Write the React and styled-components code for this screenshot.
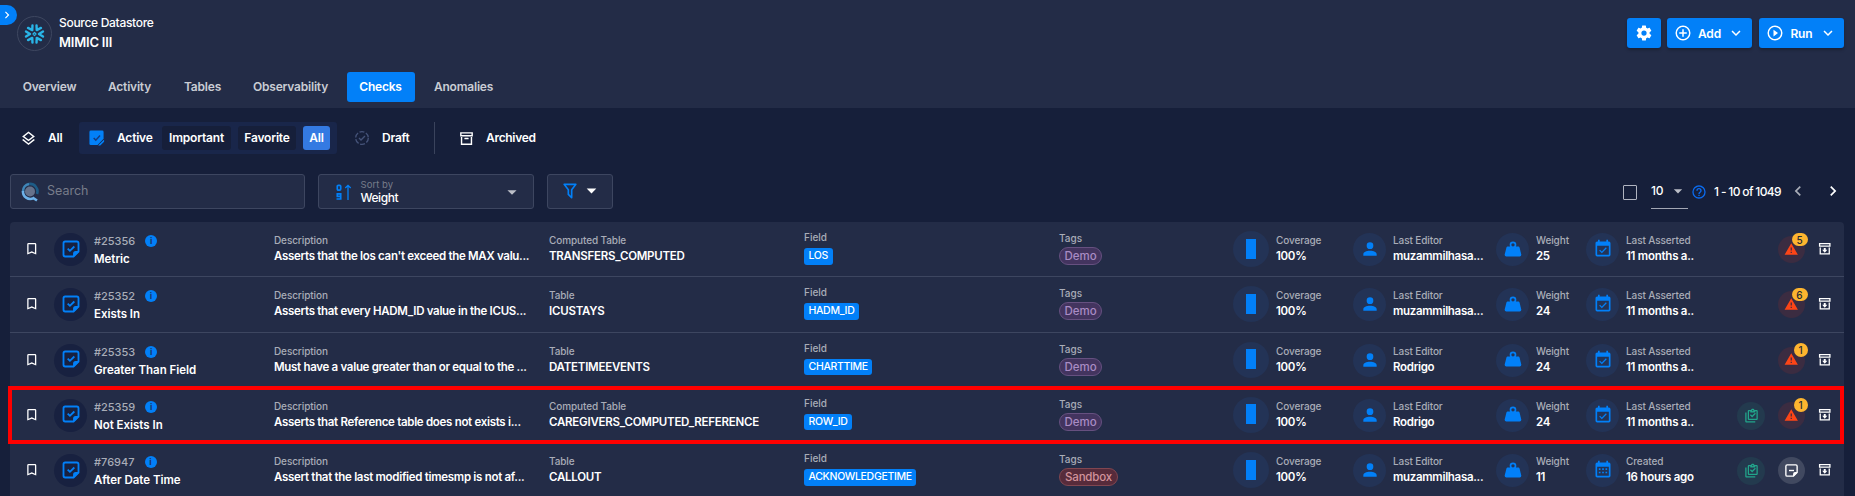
import React from "react";
import styled, { createGlobalStyle } from "styled-components";

const Global = createGlobalStyle`
  * { box-sizing: border-box; }
  body { margin: 0; background: #161f3a; color: #fff; font-family: Inter, "Liberation Sans", sans-serif; overflow: hidden; }
  svg { display: block; flex: none; }
`;

const paths = {
  right: "M8.59 16.58 13.17 12 8.59 7.41 10 6l6 6-6 6z",
  left: "M15.41 16.58 10.83 12l4.58-4.59L14 6l-6 6 6 6z",
  down: "M7.41 8.58 12 13.17l4.59-4.59L18 10l-6 6-6-6z",
  caret: "M7 10l5 5 5-5z",
  gear: "M12 15.5A3.5 3.5 0 0 1 8.5 12 3.5 3.5 0 0 1 12 8.5a3.5 3.5 0 0 1 3.5 3.5 3.5 3.5 0 0 1-3.5 3.5m7.43-2.53c.04-.32.07-.64.07-.97s-.03-.66-.07-1l2.11-1.63c.19-.15.24-.42.12-.64l-2-3.46c-.12-.22-.39-.31-.61-.22l-2.49 1c-.52-.39-1.06-.73-1.69-.98l-.37-2.65A.506.506 0 0 0 14 2h-4c-.25 0-.46.18-.5.42l-.37 2.65c-.63.25-1.17.59-1.69.98l-2.49-1c-.22-.09-.49 0-.61.22l-2 3.46c-.13.22-.07.49.12.64L4.57 11c-.04.34-.07.67-.07 1s.03.65.07.97l-2.11 1.66c-.19.15-.25.42-.12.64l2 3.46c.12.22.39.3.61.22l2.49-1.01c.52.4 1.06.74 1.69.99l.37 2.65c.04.24.25.42.5.42h4c.25 0 .46-.18.5-.42l.37-2.65c.63-.26 1.17-.59 1.69-.99l2.49 1.01c.22.08.49 0 .61-.22l2-3.46c.12-.22.07-.49-.12-.64z",
  plus: "M12 20c-4.41 0-8-3.59-8-8s3.59-8 8-8 8 3.59 8 8-3.59 8-8 8m0-18A10 10 0 0 0 2 12a10 10 0 0 0 10 10 10 10 0 0 0 10-10A10 10 0 0 0 12 2m1 5h-2v4H7v2h4v4h2v-4h4v-2h-4z",
  play: "M12 20c-4.41 0-8-3.59-8-8s3.59-8 8-8 8 3.59 8 8-3.59 8-8 8m0-18A10 10 0 0 0 2 12a10 10 0 0 0 10 10 10 10 0 0 0 10-10A10 10 0 0 0 12 2m-2 14.5 6-4.5-6-4.5z",
  layers: "M12 18.54l7.37-5.74L21 14.07l-9 7-9-7 1.62-1.26zM12 16l-9-7 9-7 9 7zm0-11.47L6.26 9 12 13.47 17.74 9z",
  archive: "M20 21H4V10h2v9h12v-9h2zM3 3h18v6H3zm6.5 8h5a.5.5 0 0 1 .5.5V13H9v-1.5a.5.5 0 0 1 .5-.5M5 5v2h14V5z",
  archiveDown: "M20 21H4V10h2v9h12v-9h2zM3 3h18v6H3zm2 2v2h14V5zm5.5 6v2.5H8L12 18l4-4.5h-2.5V11z",
  bookmark: "M17 18l-5-2.18L7 18V5h10m0-2H7a2 2 0 0 0-2 2v16l7-3 7 3V5a2 2 0 0 0-2-2z",
  funnel: "M15 19.88c.04.3-.06.62-.29.83a.996.996 0 0 1-1.41 0L9.29 16.7a.989.989 0 0 1-.29-.83v-5.12L4.21 4.62a1 1 0 0 1 .17-1.4c.19-.14.4-.22.62-.22h14c.22 0 .43.08.62.22a1 1 0 0 1 .17 1.4L15 10.75zM7.04 5 11 10.06v5.52l2 2v-7.53L16.96 5z",
  help: "M11 18h2v-2h-2zm1-16A10 10 0 0 0 2 12a10 10 0 0 0 10 10 10 10 0 0 0 10-10A10 10 0 0 0 12 2m0 18c-4.41 0-8-3.59-8-8s3.59-8 8-8 8 3.59 8 8-3.59 8-8 8m0-14a4 4 0 0 0-4 4h2a2 2 0 0 1 2-2 2 2 0 0 1 2 2c0 2-3 1.75-3 5h2c0-2.25 3-2.5 3-5a4 4 0 0 0-4-4z",
  person: "M12 4a4 4 0 0 1 4 4 4 4 0 0 1-4 4 4 4 0 0 1-4-4 4 4 0 0 1 4-4m0 10c4.42 0 8 1.79 8 4v2H4v-2c0-2.21 3.58-4 8-4z",
  weight: "M12 3a4 4 0 0 1 4 4c0 .73-.19 1.41-.54 2H18c.95 0 1.75.67 1.95 1.56C21.96 18.57 22 18.78 22 19a2 2 0 0 1-2 2H4a2 2 0 0 1-2-2c0-.22.04-.43 2.05-8.44C4.25 9.67 5.05 9 6 9h2.54A3.9 3.9 0 0 1 8 7a4 4 0 0 1 4-4m0 2a2 2 0 0 0-2 2 2 2 0 0 0 2 2 2 2 0 0 0 2-2 2 2 0 0 0-2-2z",
  calCheck: "M19 19H5V8h14m0-5h-1V1h-2v2H8V1H6v2H5c-1.11 0-2 .9-2 2v14a2 2 0 0 0 2 2h14a2 2 0 0 0 2-2V5a2 2 0 0 0-2-2m-2.47 8.06L15.47 10l-4.88 4.88-2.12-2.12-1.06 1.06L10.59 17z",
  calMonth: "M9 10v2H7v-2zm4 0v2h-2v-2zm4 0v2h-2v-2zm2-7a2 2 0 0 1 2 2v14a2 2 0 0 1-2 2H5c-1.11 0-2-.9-2-2V5a2 2 0 0 1 2-2h1V1h2v2h8V1h2v2zm0 16V8H5v11zM9 14v2H7v-2zm4 0v2h-2v-2zm4 0v2h-2v-2z",
  alert: "M13 14h-2V9h2m0 9h-2v-2h2M1 21h22L12 2z",
  clipboards: "M4 7v14h14v2H4c-1.1 0-2-.9-2-2V7zM20 3c1.1 0 2 .9 2 2v12c0 1.1-.9 2-2 2H8c-1.1 0-2-.9-2-2V5c0-1.1.9-2 2-2h3.18C11.6 1.84 12.7 1 14 1s2.4.84 2.82 2zm-6 0c-.55 0-1 .45-1 1s.45 1 1 1 1-.45 1-1-.45-1-1-1m-4 4V5H8v12h12V5h-2v2zm3 8-3.5-3.5 1.41-1.41L13 12.17l4.59-4.58L19 9z",
};

const Icon = ({ name, size = 18, color = "#fff" }) => (
  <svg width={size} height={size} viewBox="0 0 24 24" fill={color} fillRule="evenodd"><path d={paths[name]} /></svg>
);

const NoteCheck = ({ size = 20, minus, color = "#0280f8" }) => (
  <svg width={size} height={size} viewBox="0 0 24 24" fill="none" stroke={color} strokeWidth="2.2">
    <path d="M5 3h14a2 2 0 0 1 2 2v10l-6 6H5a2 2 0 0 1-2-2V5a2 2 0 0 1 2-2z" />
    <path d="M21 14.5h-3.500a3 3 0 0 0-3 3V21h1.500l5-5z" fill={color} stroke="none" />
    <path d={minus ? "M8 12h8" : "m8 11.5 2.700 2.700 5.300-5.200"} />
  </svg>
);

const NoteSolid = () => (
  <svg width="17" height="18" viewBox="0 0 24 25" fill="none">
    <path d="M4 2h16a2 2 0 0 1 2 2v9.500l-8.500 9H4a2 2 0 0 1-2-2V4a2 2 0 0 1 2-2z" fill="#0280f8" />
    <path d="M22 16.500v1l-5 5h-1z" fill="#0280f8" stroke="#0280f8" strokeWidth="1.500" />
    <path d="m8 12.500 3 3 6-6.500" stroke="#163a80" strokeWidth="2" />
  </svg>
);

const Snowflake = () => (
  <svg width="21" height="22" viewBox="-11 -11.5 22 23" fill="none" stroke="#29b5e8" strokeWidth="2.5" strokeLinecap="round" strokeLinejoin="round">
    {[30, 90, 150, 210, 270, 330].map((a) => (
      <path key={a} transform={`rotate(${a})`} d="M-2.700 -8.900 0 -4.700 2.700 -8.900" />
    ))}
    <path d="M0-1.600 1.600 0 0 1.600-1.600 0z" strokeWidth="1.200" />
  </svg>
);

const Header = styled.header`
  height: 108px; background: #232c47; padding: 16px 11px 6px 10px;
  display: flex; flex-direction: column; justify-content: space-between;
`;
const HeaderTop = styled.div`display: flex; align-items: flex-start; padding-left: 7px;`;
const Expand = styled.div`
  position: absolute; left: 0; top: 5px; width: 17px; height: 20px; border-radius: 0 10px 10px 0;
  background: #0280f8; display: flex; align-items: center;
`;
const Logo = styled.div`
  width: 35px; height: 35px; border: 1px solid #3e4760; border-radius: 50%;
  display: flex; align-items: center; justify-content: center;
`;
const Titles = styled.div`margin-left: 7px; flex: 1;`;
const Text = styled.div`
  font-size: ${(p) => p.$size || 12}px; line-height: ${(p) => p.$lh || 16}px; font-weight: ${(p) => p.$w || 500};
  letter-spacing: ${(p) => p.$ls || 0}px; color: ${(p) => p.$c || "#fff"}; white-space: nowrap;
`;
const Actions = styled.div`display: flex; gap: 6px; padding-top: 2px;`;
const Button = styled.button`
  width: ${(p) => p.$width}px; height: 30px; border: 0; border-radius: 3px; background: #0280f8; padding: 0;
  margin-left: ${(p) => p.$ml || 0}px;
  display: flex; align-items: center; justify-content: center; gap: 6px; color: #fff;
  font: 600 12px Inter, sans-serif; letter-spacing: -0.1px; box-shadow: 0 2px 3px rgba(0, 0, 0, 0.25);
`;
const Tabs = styled.nav`display: flex; gap: 6px; padding-left: 0.5px;`;
const Tab = styled.div`
  width: ${(p) => p.$width}px; height: 30px; border-radius: 3px; display: flex; align-items: center; justify-content: center;
  padding-bottom: 1px; font-size: 12px; font-weight: 600; letter-spacing: -0.2px; white-space: nowrap;
  color: ${(p) => (p.$active ? "#fff" : "#c9ccd4")}; background: ${(p) => (p.$active ? "#0280f8" : "transparent")};
`;

const Filters = styled.div`display: flex; align-items: center; height: 32px; margin-top: 14px; padding-left: 20px;`;
const Group = styled.div`
  width: 258px; height: 32px; margin: 0 17px; background: #19264a; border-radius: 3px; padding: 0 7px 0 9px;
  display: flex; align-items: center;
`;
const FilterText = styled.div`
  width: ${(p) => p.$width}px; font-size: 12px; font-weight: 600; letter-spacing: ${(p) => p.$ls ?? -0.2}px; white-space: nowrap;
  margin-left: ${(p) => p.$ml || 0}px; padding-bottom: 2px;
`;
const Chip = styled.div`
  width: ${(p) => p.$width}px; height: 24px; margin-left: ${(p) => p.$ml ?? 7}px; border-radius: 3px; white-space: nowrap;
  display: flex; align-items: center; justify-content: center; font-size: 12px; font-weight: 600; letter-spacing: -0.2px;
  padding-bottom: 1px; background: ${(p) => (p.$active ? "#347ae2" : "#161f3a")};
`;
const Divider = styled.div`width: 1px; height: 32px; background: #3a435c; margin: 0 23px 0 24px;`;

const Toolbar = styled.div`display: flex; align-items: center; height: 35px; margin-top: 20px; padding: 0 12px 0 10px;`;
const Field = styled.div`
  width: ${(p) => p.$width}px; height: 35px; margin-right: 13px; border: 1px solid #3d4660; border-radius: 3px; background: #232c47;
  display: flex; align-items: center; padding: ${(p) => p.$pad};
`;
const Placeholder = styled.div`margin-left: 8px; padding-bottom: 1px; font-size: 12.5px; line-height: 16px; color: #777c8a;`;
const SortText = styled.div`flex: 1; margin-left: 8.5px;`;
const Pager = styled.div`margin-left: auto; display: flex; align-items: center; height: 35px;`;
const Checkbox = styled.div`width: 14px; height: 15px; border: 1px solid #b0b4c0; border-radius: 1px; margin-right: 14px; margin-top: 2px;`;
const PageSize = styled.div`
  width: 37px; height: 34px; margin-right: 2.5px; border-bottom: 1px solid #a3a7b4;
  display: flex; align-items: center; justify-content: space-between;
`;
const Range = styled(Text)`width: 66px; margin: 0 7.5px;`;
const Arrows = styled.div`display: flex; gap: 15.5px; padding-bottom: 2px;`;

const Table = styled.div`margin: 13px 11px 0 10px; background: #232c47; border-radius: 4px 4px 0 0; position: relative;`;
const Row = styled.div`
  height: 55.33px; border-bottom: 1px solid #3d4660; display: grid; align-items: stretch;
  grid-template-columns: 44px 40px 180px 275px 255px 255px 174px 120px 143px 90px 151px 40.5px 39px 1fr;
`;
const Cell = styled.div`padding-top: ${(p) => p.$top ?? 11}px; padding-left: ${(p) => p.$left || 0}px; position: relative;`;
const Line = styled.div`display: flex; align-items: center; gap: 10px;`;
const Disc = styled.div`
  width: ${(p) => p.$size || 33}px; height: ${(p) => p.$size || 33}px; border-radius: 50%; background: ${(p) => p.$bg || "#233356"};
  padding-bottom: ${(p) => p.$lift ?? 1}px; display: flex; align-items: center; justify-content: center; flex: none;
`;
const Info = styled.span`
  width: 12px; height: 12px; border-radius: 50%; background: #0280f8; color: #19366d; font: 700 9px/12px Inter, sans-serif; text-align: center;
`;
const Stat = styled.div`display: flex; gap: 7px;`;
const StatText = styled.div`padding-top: 2px;`;
const PairBox = styled.div`margin-top: -1px;`;
const Bar = styled.div`width: 10px; height: 20px; background: #0280f8;`;
const Badge = styled.div`
  display: inline-block; vertical-align: top; height: 16.5px; margin-top: 3px; padding: 0 4.5px; border-radius: 3px; background: #0280f8;
  font-size: 10.5px; line-height: 16.5px; font-weight: 500; letter-spacing: -0.32px; white-space: nowrap;
`;
const Tag = styled.div`
  width: ${(p) => (p.$red ? 59 : 43)}px; height: 18px; border-radius: 9px; text-align: center; font-size: 11.5px; line-height: 16px;
  border: 1px solid ${(p) => (p.$red ? "#814650" : "#665080")}; background: ${(p) => (p.$red ? "#572b3b" : "#43345f")};
  color: ${(p) => (p.$red ? "#d2939b" : "#a98cc4")}; font-weight: 500; letter-spacing: ${(p) => (p.$red ? -0.2 : 0)}px;
`;
const Count = styled.div`
  position: absolute; left: ${(p) => (p.$wide ? 14 : 16)}px; top: 10.5px; width: ${(p) => (p.$wide ? 16 : 14)}px; height: 13.5px;
  border-radius: 7px; background: #fdb52f; color: #272b35; font-size: 10px; line-height: 14px; font-weight: 500; text-align: center;
`;
const Highlight = styled.div`
  position: absolute; left: -2px; right: 0; top: 164px; height: 58px; border: 4px solid #fe0000; pointer-events: none;
`;

const rows = [
  { id: "#25356", name: "Metric", desc: "Asserts that the los can't exceed the MAX valu...", kind: "Computed Table", table: "TRANSFERS_COMPUTED", field: "LOS", tag: "Demo", editor: "muzammilhasa...", weight: 25, when: "11 months a..", alerts: 5 },
  { id: "#25352", name: "Exists In", desc: "Asserts that every HADM_ID value in the ICUS...", kind: "Table", table: "ICUSTAYS", field: "HADM_ID", tag: "Demo", editor: "muzammilhasa...", weight: 24, when: "11 months a..", alerts: 6 },
  { id: "#25353", name: "Greater Than Field", desc: "Must have a value greater than or equal to the ...", kind: "Table", table: "DATETIMEEVENTS", field: "CHARTTIME", tag: "Demo", editor: "Rodrigo", weight: 24, when: "11 months a..", alerts: 1 },
  { id: "#25359", name: "Not Exists In", desc: "Asserts that Reference table does not exists i...", kind: "Computed Table", table: "CAREGIVERS_COMPUTED_REFERENCE", field: "ROW_ID", tag: "Demo", editor: "Rodrigo", weight: 24, when: "11 months a..", alerts: 1, template: true },
  { id: "#76947", name: "After Date Time", desc: "Assert that the last modified timesmp is not af...", kind: "Table", table: "CALLOUT", field: "ACKNOWLEDGETIME", tag: "Sandbox", editor: "muzammilhasa...", weight: 11, when: "16 hours ago", created: true, template: true },
];

const Pair = ({ label, value, vls }) => (
  <PairBox>
    <Text $size={10} $c="#a9adb8" $ls={-0.1} $lh={16}>{label}</Text>
    <Text $size={11.5} $w={600} $ls={vls ?? -0.3} $lh={16}>{value}</Text>
  </PairBox>
);

const CheckRow = ({ r }) => (
  <Row>
    <Cell $top={19} $left={14}><Icon name="bookmark" size={15.5} /></Cell>
    <Cell><Disc $bg="#182140" $lift={2}><NoteCheck size={20} /></Disc></Cell>
    <Cell>
      <Line><Text $size={11} $c="#a9adb8" $lh={16}>{r.id}</Text><Info>i</Info></Line>
      <Text $size={11.5} $w={600} $lh={20} $ls={-0.02}>{r.name}</Text>
    </Cell>
    <Cell><Pair label="Description" value={r.desc} /></Cell>
    <Cell><Pair label={r.kind} value={r.table} vls={-0.24} /></Cell>
    <Cell $top={8}><Text $size={10} $c="#a9adb8" $lh={15}>Field</Text><Badge>{r.field}</Badge></Cell>
    <Cell $top={8}><Text $size={10} $c="#a9adb8" $lh={17}>Tags</Text><Tag $red={r.tag === "Sandbox"}>{r.tag}</Tag></Cell>
    <Cell $top={9}><Stat><Disc $size={36}><Bar /></Disc><StatText><Pair label="Coverage" value="100%" /></StatText></Stat></Cell>
    <Cell><Stat><Disc><Icon name="person" color="#0280f8" size={20} /></Disc><Pair label="Last Editor" value={r.editor} /></Stat></Cell>
    <Cell><Stat><Disc $lift={2}><Icon name="weight" color="#0280f8" size={20} /></Disc><Pair label="Weight" value={r.weight} /></Stat></Cell>
    <Cell><Stat><Disc><Icon name={r.created ? "calMonth" : "calCheck"} color="#0280f8" size={20} /></Disc><Pair label={r.created ? "Created" : "Last Asserted"} value={r.when} vls={-0.25} /></Stat></Cell>
    <Cell $top={14}>{r.template && <Disc $size={28} $bg="#233a4e"><Icon name="clipboards" color="#22a58b" size={15} /></Disc>}</Cell>
    <Cell $top={14}>
      <Disc $size={27} $bg={r.alerts ? "#3b2c41" : "#414960"}>{r.alerts ? <Icon name="alert" color="#fd4517" size={14.5} /> : <NoteCheck size={15} minus color="#fff" />}</Disc>
      {r.alerts && <Count $wide={r.alerts > 1}>{r.alerts}</Count>}
    </Cell>
    <Cell $top={19}><Icon name="archiveDown" size={15.5} /></Cell>
  </Row>
);

export default function App() {
  return (
    <>
      <Global />
      <Header>
        <HeaderTop>
          <Expand><Icon name="right" size={14} /></Expand>
          <Logo><Snowflake /></Logo>
          <Titles>
            <Text $size={12} $w={500} $lh={14} $ls={-0.3}>Source Datastore</Text>
            <Text $size={13} $w={600} $lh={24} $ls={-0.2}>MIMIC III</Text>
          </Titles>
          <Actions>
            <Button $width={34}><Icon name="gear" size={18} /></Button>
            <Button $width={85}><Icon name="plus" size={18} />Add<Icon name="down" size={18} /></Button>
            <Button $width={85} $ml={1}><Icon name="play" size={18} />Run<Icon name="down" size={18} /></Button>
          </Actions>
        </HeaderTop>
        <Tabs>
          <Tab $width={78}>Overview</Tab><Tab $width={70}>Activity</Tab><Tab $width={64}>Tables</Tab>
          <Tab $width={100}>Observability</Tab><Tab $width={68} $active>Checks</Tab><Tab $width={86}>Anomalies</Tab>
        </Tabs>
      </Header>
      <Filters>
        <Icon name="layers" size={17} />
        <FilterText $ml={11} $width={14}>All</FilterText>
        <Group>
          <NoteSolid />
          <FilterText $ml={12} $width={35}>Active</FilterText>
          <Chip $width={69} $ml={10}>Important</Chip><Chip $width={58}>Favorite</Chip><Chip $width={27} $active>All</Chip>
        </Group>
        <svg width="16" height="16" viewBox="0 0 24 24" fill="none" stroke="#455379" strokeWidth="2"><circle cx="12" cy="12" r="9.5" strokeDasharray="7.5 2.45" /><path d="m7.5 12 3 3 6-6" /></svg>
        <FilterText $ml={12} $width={28}>Draft</FilterText>
        <Divider />
        <Icon name="archive" size={17} />
        <FilterText $ml={11} $width={50} $ls={-0.3}>Archived</FilterText>
      </Filters>
      <Toolbar>
        <Field $width={295} $pad="0 10px">
          <svg width="18" height="20" viewBox="0 0 18 20" fill="none">
            <circle cx="9" cy="9.5" r="5" fill="#66728b" />
            <path d="M8 2a7.500 7.500 0 0 1 8 10" stroke="#1d5c87" strokeWidth="2.600" />
            <path d="M8 2a7.500 7.500 0 0 0-6 7.500" stroke="#3f86b8" strokeWidth="2.600" />
            <path d="M2 9a7.300 7.300 0 0 0 10.500 7.200M11.500 15.500l4.500 3" stroke="#6db1e8" strokeWidth="2.600" />
          </svg>
          <Placeholder>Search</Placeholder>
        </Field>
        <Field $width={216} $pad="0 10px 0 17px">
          <svg width="16" height="18" viewBox="0 0 16 18" fill="none" stroke="#0280f8" strokeWidth="1.7">
            <rect x="1.3" y="2.300" width="3.400" height="4.800" rx="1" /><path d="M.5 16h4.200v-5.200H1.300v2.600h3.400" /><path d="M12 17V2.500M9.300 5 12 2.300 14.700 5" strokeWidth="1.300" />
          </svg>
          <SortText>
            <Text $size={9.5} $lh={11} $c="#777c8a" $w={400} $ls={0.05}>Sort by</Text>
            <Text $size={12} $lh={15} $ls={-0.45}>Weight</Text>
          </SortText>
          <Icon name="caret" size={22} color="#bcbfc8" />
        </Field>
        <Field $width={66} $pad="0 9px 2px 11.500px">
          <Icon name="funnel" size={20} color="#0280f8" /><Icon name="caret" size={23} />
        </Field>
        <Pager>
          <Checkbox />
          <PageSize><Text $size={12} $ls={-0.3}>10</Text><Icon name="caret" size={20} color="#bcbfc8" /></PageSize>
          <Icon name="help" size={16} color="#0b6cf0" />
          <Range $size={12} $ls={-0.65}>1 - 10 of 1049</Range>
          <Arrows><Icon name="left" size={20} color="#a9adb8" /><Icon name="right" size={20} /></Arrows>
        </Pager>
      </Toolbar>
      <Table>
        {rows.map((r) => <CheckRow key={r.id} r={r} />)}
        <Highlight />
      </Table>
    </>
  );
}
